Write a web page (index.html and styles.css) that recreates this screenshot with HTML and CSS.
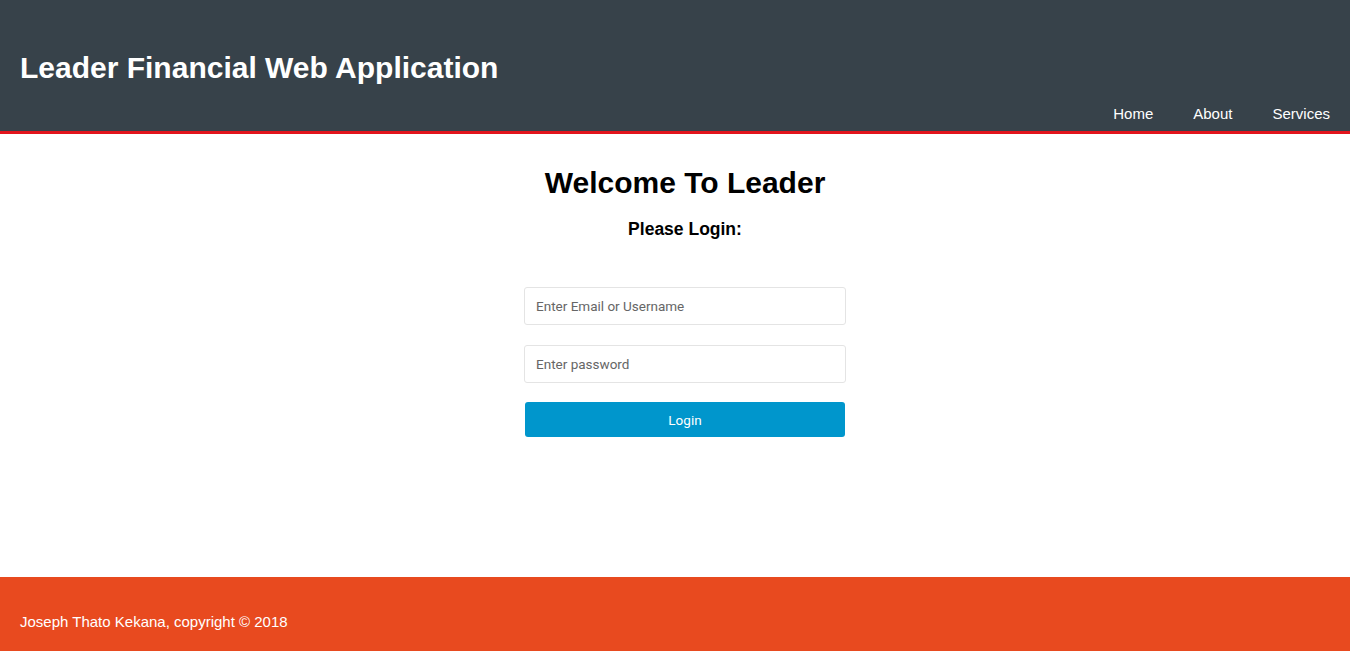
FILE: index.html
```html
<!DOCTYPE html>
<html>
<head>
<meta charset="utf-8">
<link rel="stylesheet" href="styles.css">
</head>
<body>
<div class="page">
  <header class="header">
    <h1 class="brand">Leader Financial Web Application</h1>
    <nav class="nav">
      <a href="#">Home</a>
      <a href="#">About</a>
      <a href="#">Services</a>
    </nav>
  </header>
  <main class="main">
    <h1 class="welcome">Welcome To Leader</h1>
    <h3 class="please">Please Login:</h3>
    <form class="form">
      <input class="field field-user" type="text" placeholder="Enter Email or Username">
      <input class="field field-pass" type="password" placeholder="Enter password">
      <button class="btn" type="button">Login</button>
    </form>
  </main>
  <footer class="footer">
    <p>Joseph Thato Kekana, copyright &copy; 2018</p>
  </footer>
</div>
</body>
</html>
```
FILE: styles.css
```css
html, body {
  margin: 0;
  padding: 0;
  height: 100%;
}
body {
  font-family: "Liberation Sans", Arial, sans-serif;
  background: #fff;
  color: #000;
}
.page {
  display: flex;
  flex-direction: column;
  height: 651px;
}
.header {
  background: #37424a;
  border-bottom: 3px solid #e2141c;
  height: 131px;
  display: flex;
  flex-direction: column;
  padding: 0 20px;
}
.brand {
  margin: 0;
  padding-top: 51px;
  font-size: 30px;
  font-weight: bold;
  color: #fff;
  line-height: 34px;
}
.nav {
  display: flex;
  justify-content: flex-end;
  gap: 40px;
  margin-top: 20px;
}
.nav a {
  color: #fff;
  text-decoration: none;
  font-size: 15px;
  line-height: 18px;
}
.main {
  flex: 1;
  display: flex;
  flex-direction: column;
  align-items: center;
  padding-left: 20px;
}
.welcome {
  margin: 32px 0 0;
  font-size: 30px;
  line-height: 34px;
  font-weight: bold;
}
.please {
  margin: 18px 0 0;
  font-size: 17.5px;
  line-height: 22px;
  font-weight: bold;
}
.form {
  display: flex;
  flex-direction: column;
  align-items: center;
  margin-top: 47px;
  width: 322px;
}
.field {
  box-sizing: border-box;
  width: 322px;
  height: 38px;
  border: 1px solid #e4e4e4;
  border-radius: 3px;
  padding: 0 11px;
  font-family: Roboto, "Liberation Sans", sans-serif;
  font-size: 13.5px;
  color: #333;
  outline: none;
}
.field-user {
  margin-bottom: 20px;
}
.field-pass {
  margin-bottom: 19px;
}
.field::placeholder {
  color: #666;
}
.btn {
  width: 320px;
  height: 35px;
  background: #0096cc;
  border: none;
  border-radius: 3px;
  color: #fff;
  font-family: Roboto, "Liberation Sans", sans-serif;
  font-size: 13.5px;
}
.footer {
  background: #e84a1f;
  height: 74px;
  display: flex;
  align-items: center;
  padding: 0 20px;
}
.footer p {
  margin: 14px 0 0;
  color: #fff;
  font-size: 15px;
}
```
